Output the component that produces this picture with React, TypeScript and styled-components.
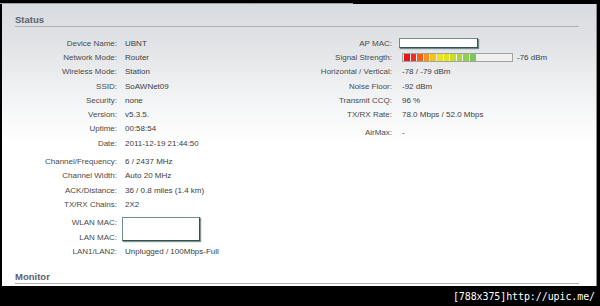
import React from "react";
import styled, { createGlobalStyle } from "styled-components";

const Global = createGlobalStyle`
  html, body { margin: 0; padding: 0; background: #000; }
  body { width: 600px; height: 306px; overflow: hidden; }
`;

const Page = styled.div`
  width: 600px;
  height: 306px;
  background: #000;
  display: flex;
  flex-direction: column;
  font-family: "Liberation Sans", Arial, sans-serif;
`;

const TopStrip = styled.div`
  height: 4px;
  display: flex;
  align-items: flex-end;
`;

const TabEdge = styled.div`
  width: 353px;
  height: 1px;
  background: #9a9da2;
`;

const Panel = styled.div`
  margin: 0 3px 0 2px;
  height: 282px;
  box-sizing: border-box;
  padding: 10px 17px 0 13px;
  border-right: 1px solid #8c8c8c;
  background: linear-gradient(#d8dbe0 0px, #e1e3e6 40px, #f4f5f6 100px, #ffffff 140px);
  display: flex;
  flex-direction: column;
`;

const SectionTitle = styled.div<{ $gap?: number }>`
  font-weight: bold;
  font-size: 9.5px;
  line-height: 12px;
  color: #59616d;
  border-bottom: 1px solid #aeb2b7;
  margin-top: ${(p) => p.$gap ?? 0}px;
`;

const Columns = styled.div`
  display: flex;
  margin-top: 9px;
`;

const Column = styled.div<{ $width?: number }>`
  width: ${(p) => (p.$width ? `${p.$width}px` : "auto")};
  flex: ${(p) => (p.$width ? "none" : "1")};
  display: flex;
  flex-direction: column;
  gap: 4px;
`;

const Group = styled.div<{ $label: number; $gap: number }>`
  display: grid;
  grid-template-columns: ${(p) => p.$label}px 1fr;
  column-gap: ${(p) => p.$gap}px;
  grid-auto-rows: 14.3px;
  align-items: center;
  font-size: 8px;
`;

const Label = styled.div`
  text-align: right;
  color: #4a4a4a;
  white-space: nowrap;
`;

const Value = styled.div`
  color: #3d3d3d;
  white-space: nowrap;
  display: flex;
  align-items: center;
`;

const MacBox = styled.div<{ $h: number; $w: number; $span?: number }>`
  width: ${(p) => p.$w}px;
  height: ${(p) => p.$h}px;
  margin-left: -3px;
  box-sizing: border-box;
  background: #fff;
  border: 1px solid #6f8d8a;
  border-right-color: #34524f;
  border-bottom-color: #34524f;
  box-shadow: 1px 1px 1px rgba(40, 80, 76, 0.6);
  grid-row: span ${(p) => p.$span ?? 1};
  align-self: ${(p) => (p.$span ? "start" : "center")};
  margin-top: ${(p) => (p.$span ? 1.5 : 0)}px;
`;

const SignalBar = styled.div`
  width: 111px;
  height: 9px;
  box-sizing: border-box;
  border: 1px solid #a2a2a2;
  background: #efefef;
  padding: 0 1px;
  display: flex;
  align-items: center;
  gap: 1px;
`;

const Segment = styled.div<{ $c: string }>`
  width: 5.6px;
  height: 7px;
  background: ${(p) => p.$c};
`;

const SignalText = styled.span`
  margin-left: 4px;
`;

const Footer = styled.div`
  height: 20px;
  display: flex;
  align-items: center;
  justify-content: flex-end;
  padding-right: 5px;
  color: #fff;
  font-family: "DejaVu Sans Mono", "Liberation Mono", monospace;
  font-size: 10px;
  letter-spacing: -0.1px;
`;

const segColors = [
  "#e8141a",
  "#f0301e",
  "#f5611b",
  "#f8921a",
  "#f7c21c",
  "#eee21c",
  "#dfe320",
  "#c9dd2a",
  "#acd63c",
  "#8fcd4c",
  "#7cc657",
];

type Row = [string, React.ReactNode];

const left1: Row[] = [
  ["Device Name:", "UBNT"],
  ["Network Mode:", "Router"],
  ["Wireless Mode:", "Station"],
  ["SSID:", "SoAWNet09"],
  ["Security:", "none"],
  ["Version:", "v5.3.5."],
  ["Uptime:", "00:58:54"],
  ["Date:", "2011-12-19 21:44:50"],
];

const left2: Row[] = [
  ["Channel/Frequency:", "6 / 2437 MHz"],
  ["Channel Width:", "Auto 20 MHz"],
  ["ACK/Distance:", "36 / 0.8 miles (1.4 km)"],
  ["TX/RX Chains:", "2X2"],
];

const rows = (list: Row[]) =>
  list.map(([l, v]) => (
    <React.Fragment key={l}>
      <Label>{l}</Label>
      <Value>{v}</Value>
    </React.Fragment>
  ));

export default function App() {
  const right1: Row[] = [
    ["AP MAC:", <MacBox $w={79} $h={10} />],
    [
      "Signal Strength:",
      <>
        <SignalBar>
          {segColors.map((c, i) => (
            <Segment key={i} $c={c} />
          ))}
        </SignalBar>
        <SignalText>-76 dBm</SignalText>
      </>,
    ],
    ["Horizontal / Vertical:", "-78 / -79 dBm"],
    ["Noise Floor:", "-92 dBm"],
    ["Transmit CCQ:", "96 %"],
    ["TX/RX Rate:", "78.0 Mbps / 52.0 Mbps"],
  ];

  return (
    <Page>
      <Global />
      <TopStrip>
        <TabEdge />
      </TopStrip>
      <Panel>
        <SectionTitle>Status</SectionTitle>
        <Columns>
          <Column $width={285}>
            <Group $label={102} $gap={8}>{rows(left1)}</Group>
            <Group $label={102} $gap={8}>{rows(left2)}</Group>
            <Group $label={102} $gap={8}>
              <Label>WLAN MAC:</Label>
              <MacBox $w={78} $h={24} $span={2} />
              <Label>LAN MAC:</Label>
              <Label>LAN1/LAN2:</Label>
              <Value>Unplugged / 100Mbps-Full</Value>
            </Group>
          </Column>
          <Column>
            <Group $label={92} $gap={10}>{rows(right1)}</Group>
            <Group $label={92} $gap={10}>
              <Label>AirMax:</Label>
              <Value>-</Value>
            </Group>
          </Column>
        </Columns>
        <SectionTitle $gap={12.5}>Monitor</SectionTitle>
      </Panel>
      <Footer>[788x375]http://upic.me/</Footer>
    </Page>
  );
}
